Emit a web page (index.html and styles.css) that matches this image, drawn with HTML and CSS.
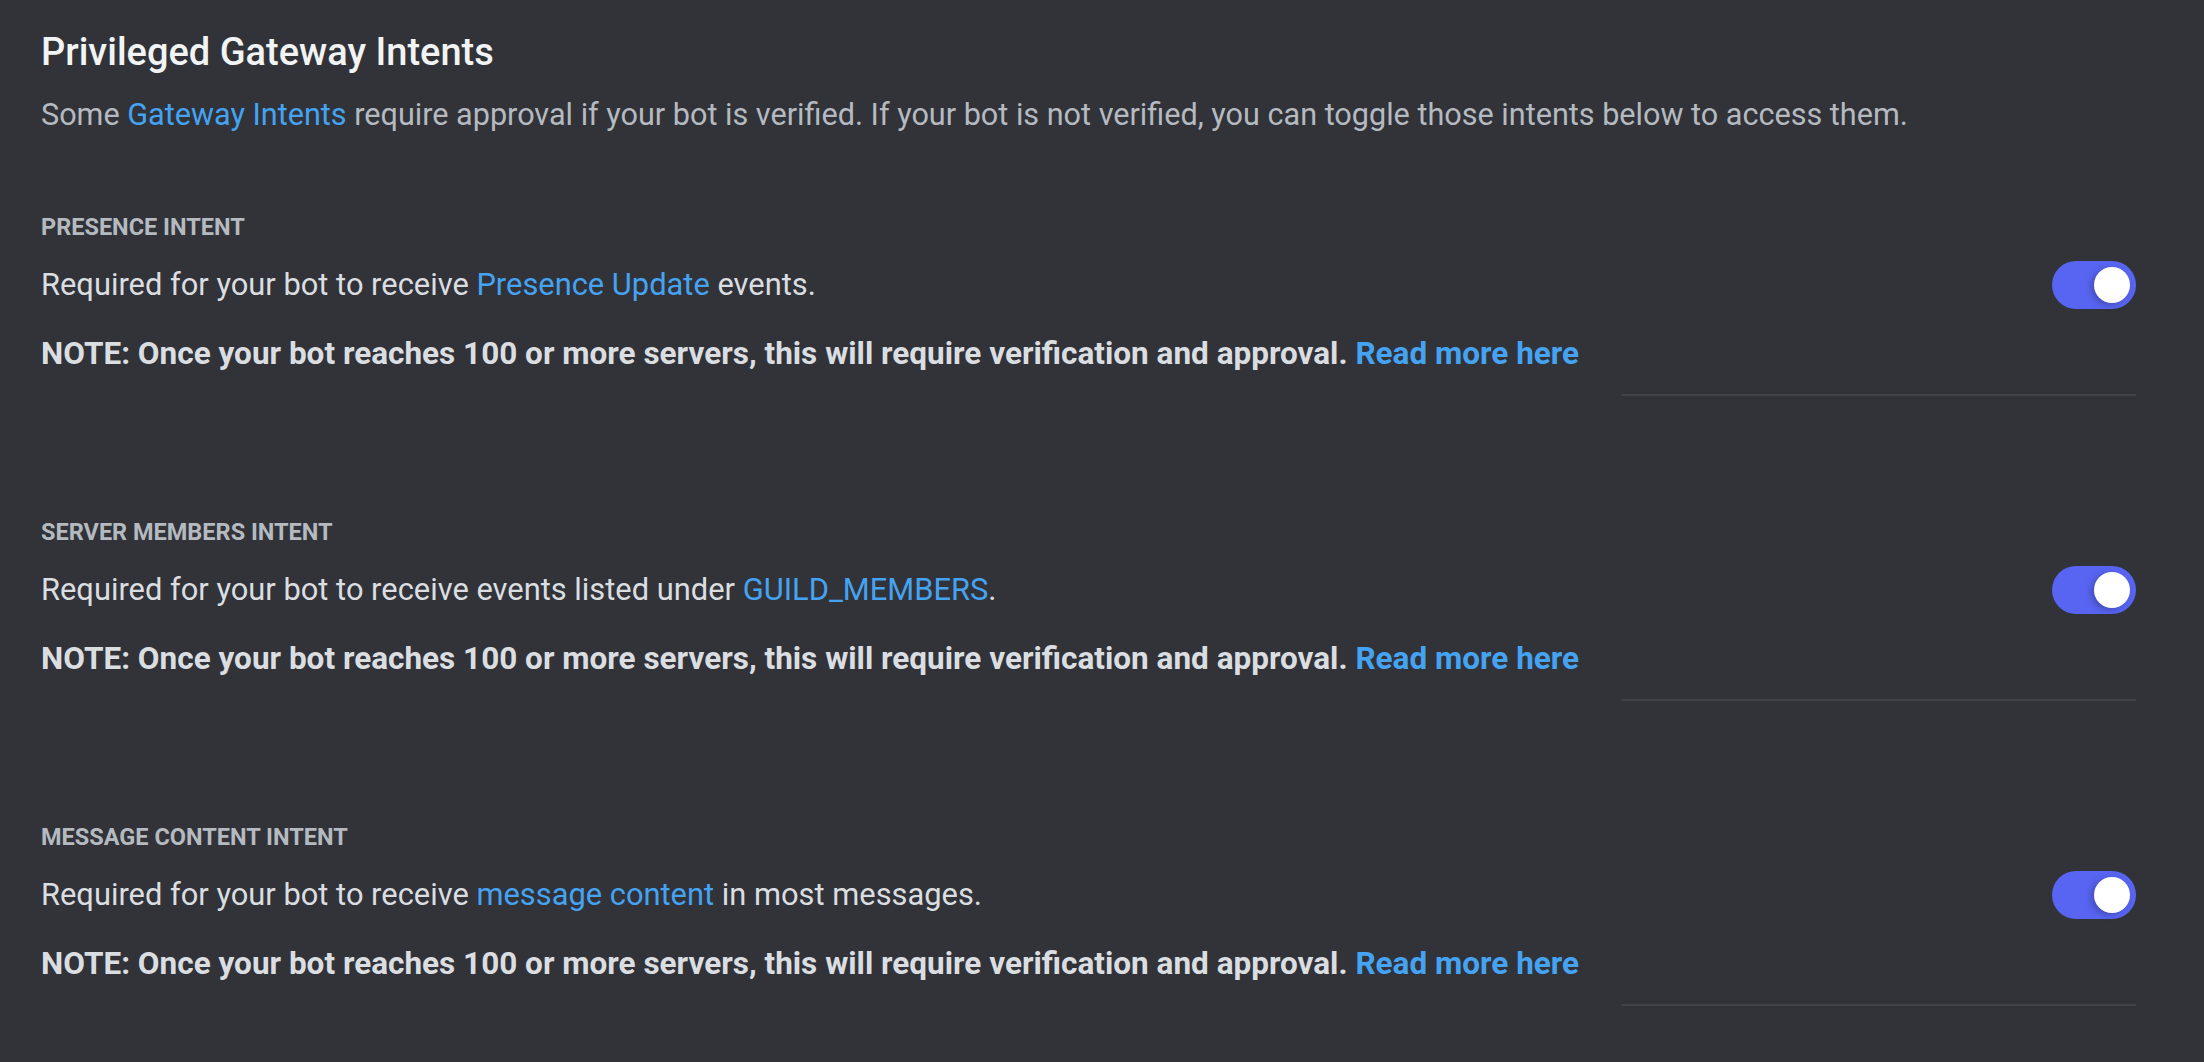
FILE: index.html
```html
<!DOCTYPE html>
<html lang="en">
<head>
<meta charset="utf-8">
<title>Privileged Gateway Intents</title>
<link rel="stylesheet" href="styles.css">
</head>
<body>
<main class="page">
  <h1 class="title">Privileged Gateway Intents</h1>
  <p class="desc">Some <a class="link" href="#">Gateway Intents</a> require approval if your bot is verified. If your bot is not verified, you can toggle those intents below to access them.</p>

  <section class="intent">
    <h2 class="label">PRESENCE INTENT</h2>
    <div class="row">
      <div class="texts">
        <p class="req">Required for your bot to receive <a class="link" href="#">Presence Update</a> events.</p>
        <p class="note">NOTE: Once your bot reaches 100 or more servers, this will require verification and approval. <a class="link" href="#">Read more here</a></p>
      </div>
      <div class="toggle"><span class="knob"></span></div>
    </div>
    <div class="divider"></div>
  </section>

  <section class="intent">
    <h2 class="label">SERVER MEMBERS INTENT</h2>
    <div class="row">
      <div class="texts">
        <p class="req">Required for your bot to receive events listed under <a class="link" href="#">GUILD_MEMBERS</a>.</p>
        <p class="note">NOTE: Once your bot reaches 100 or more servers, this will require verification and approval. <a class="link" href="#">Read more here</a></p>
      </div>
      <div class="toggle"><span class="knob"></span></div>
    </div>
    <div class="divider"></div>
  </section>

  <section class="intent">
    <h2 class="label">MESSAGE CONTENT INTENT</h2>
    <div class="row">
      <div class="texts">
        <p class="req">Required for your bot to receive <a class="link" href="#">message content</a> in most messages.</p>
        <p class="note">NOTE: Once your bot reaches 100 or more servers, this will require verification and approval. <a class="link" href="#">Read more here</a></p>
      </div>
      <div class="toggle"><span class="knob"></span></div>
    </div>
    <div class="divider"></div>
  </section>
</main>
</body>
</html>
```
FILE: styles.css
```css
html, body {
  margin: 0;
  padding: 0;
  background: #313338;
  height: 100%;
}
body {
  font-family: Roboto, "Noto Sans", sans-serif;
  color: #dbdee1;
  overflow: hidden;
}
.page {
  padding: 28px 68px 0 41px;
}
.title {
  margin: 0;
  font-size: 38px;
  line-height: 48px;
  font-weight: 500;
  color: #f2f3f5;
}
.desc {
  margin: 19px 0 0;
  font-size: 30.6px;
  line-height: 40px;
  color: #b5bac1;
}
.link {
  color: #45a3f2;
  text-decoration: none;
}
.intent {
  display: flex;
  flex-direction: column;
}
.intent:first-of-type {
  margin-top: 77px;
}
.intent + .intent {
  margin-top: 121px;
}
.label {
  margin: 0;
  font-size: 23.5px;
  line-height: 30px;
  font-weight: 700;
  color: #b5bac1;
}
.row {
  display: flex;
  justify-content: space-between;
  align-items: flex-start;
  margin-top: 19px;
}
.req {
  margin: 0;
  font-size: 30.85px;
  line-height: 48px;
}
.note {
  margin: 25px 0 0;
  font-size: 31.5px;
  line-height: 40px;
  font-weight: 700;
}
.toggle {
  flex: none;
  width: 84px;
  height: 48px;
  border-radius: 24px;
  background: #5865f2;
  display: flex;
  justify-content: flex-end;
  align-items: center;
  padding: 0 6px;
  box-sizing: border-box;
}
.knob {
  width: 36px;
  height: 36px;
  border-radius: 50%;
  background: #ffffff;
  box-shadow: -3px 2px 6px rgba(30, 31, 80, 0.35);
}
.divider {
  align-self: flex-end;
  width: 515px;
  height: 2px;
  margin-top: 20px;
  background: #3f4248;
}
```
